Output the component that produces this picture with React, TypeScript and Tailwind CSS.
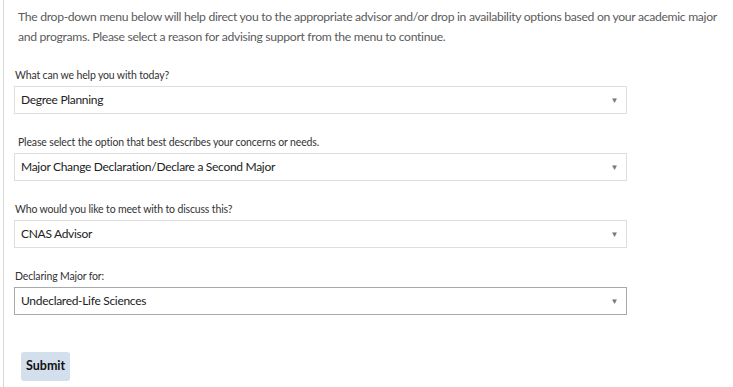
const fields = [
  { label: 'What can we help you with today?', value: 'Degree Planning', indent: false },
  { label: 'Please select the option that best describes your concerns or needs.', value: 'Major Change Declaration/Declare a Second Major', indent: true },
  { label: 'Who would you like to meet with to discuss this?', value: 'CNAS Advisor', indent: false },
  { label: 'Declaring Major for:', value: 'Undeclared-Life Sciences', indent: false, active: true },
];

function SelectBox({ value, active }: { value: string; active?: boolean }) {
  return (
    <div
      className={`flex h-[28px] w-[613px] items-center justify-between bg-white pl-[6px] pr-[8px] text-[12px] tracking-[-0.3px] text-[#222] border ${
        active ? 'border-[#a9a9a9]' : 'border-[#dedede]'
      }`}
    >
      <span>{value}</span>
      <span className="text-[8px] text-[#777]">▼</span>
    </div>
  );
}

export default function App() {
  return (
    <div className="h-[387px] w-[733px] overflow-hidden bg-white" style={{ fontFamily: 'Lato, "Open Sans", sans-serif' }}>
      <div className="ml-[3px] h-full border-l border-[#d6d6d6] pl-[10px]">
        <p className="whitespace-nowrap pl-[4px] pt-[7px] text-[12.2px] leading-[20px] tracking-[-0.32px] text-[#5b5b5b]">
          The drop-down menu below will help direct you to the appropriate advisor and/or drop in availability options based on your academic major
          <br />
          and programs. Please select a reason for advising support from the menu to continue.
        </p>
        <div className="mt-[20px] flex flex-col gap-[20px]">
          {fields.map((f) => (
            <div key={f.label} className="flex flex-col gap-[3px]">
              <label className={`text-[10.5px] leading-[16px] tracking-[-0.15px] text-[#333] ${f.indent ? 'pl-[4px]' : 'pl-[1px]'}`}>
                {f.label}
              </label>
              <SelectBox value={f.value} active={f.active} />
            </div>
          ))}
        </div>
        <button className="ml-[7px] mt-[37px] h-[29px] rounded-[3px] bg-[#d3dfec] px-[5px] text-[12.5px] font-bold text-[#111]">
          Submit
        </button>
      </div>
    </div>
  );
}
